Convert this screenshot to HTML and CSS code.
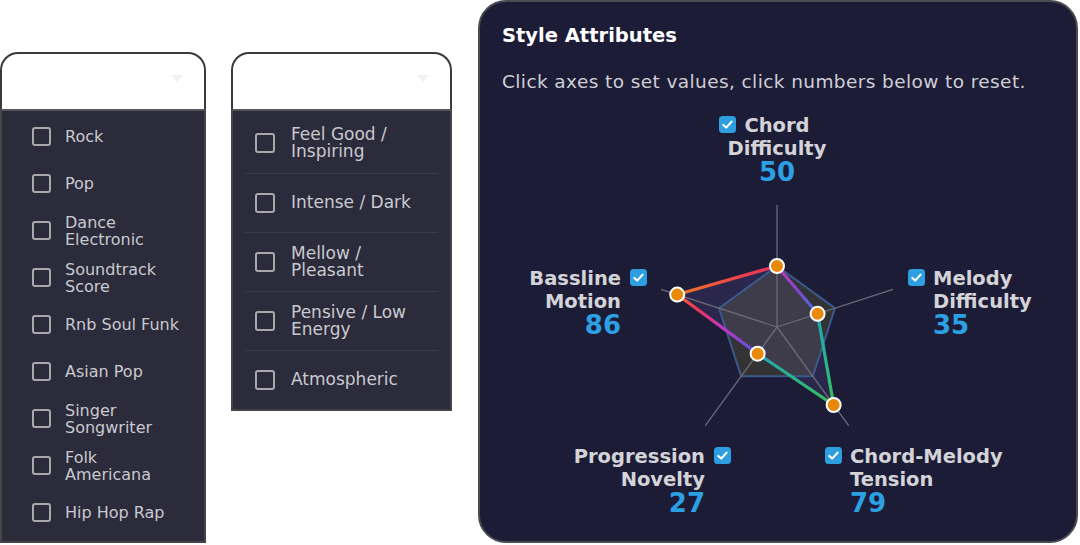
FILE: index.html
```html
<!DOCTYPE html>
<html lang="en">
<head>
<meta charset="utf-8">
<title>Style Attributes</title>
<link rel="stylesheet" href="styles.css">
</head>
<body>
<div class="page">
  <div class="dropdown genre">
    <div class="dd-head"><span class="dd-arrow"></span></div>
    <ul class="dd-list genre-list">
      <li class="dd-item"><span class="cb"></span><span class="lbl">Rock</span></li>
      <li class="dd-item"><span class="cb"></span><span class="lbl">Pop</span></li>
      <li class="dd-item"><span class="cb"></span><span class="lbl">Dance<br>Electronic</span></li>
      <li class="dd-item"><span class="cb"></span><span class="lbl">Soundtrack<br>Score</span></li>
      <li class="dd-item"><span class="cb"></span><span class="lbl">Rnb Soul Funk</span></li>
      <li class="dd-item"><span class="cb"></span><span class="lbl">Asian Pop</span></li>
      <li class="dd-item"><span class="cb"></span><span class="lbl">Singer<br>Songwriter</span></li>
      <li class="dd-item"><span class="cb"></span><span class="lbl">Folk<br>Americana</span></li>
      <li class="dd-item"><span class="cb"></span><span class="lbl">Hip Hop Rap</span></li>
    </ul>
  </div>

  <div class="dropdown mood">
    <div class="dd-head"><span class="dd-arrow"></span></div>
    <ul class="dd-list mood-list">
      <li class="dd-item first"><span class="cb"></span><span class="lbl">Feel Good /<br>Inspiring</span></li>
      <li class="dd-item"><span class="cb"></span><span class="lbl">Intense / Dark</span></li>
      <li class="dd-item"><span class="cb"></span><span class="lbl">Mellow /<br>Pleasant</span></li>
      <li class="dd-item"><span class="cb"></span><span class="lbl">Pensive / Low<br>Energy</span></li>
      <li class="dd-item"><span class="cb"></span><span class="lbl">Atmospheric</span></li>
    </ul>
  </div>

  <section class="panel">
    <h2 class="panel-title">Style Attributes</h2>
    <p class="panel-sub">Click axes to set values, click numbers below to reset.</p>
    <div class="chart">
      <svg class="radar" width="596" height="441" viewBox="0 0 596 441">
        <defs>
          <linearGradient id="g1" gradientUnits="userSpaceOnUse" x1="197.2" y1="194.6" x2="297" y2="166">
            <stop offset="0" stop-color="#f47a22"/>
            <stop offset="0.5" stop-color="#ee4a44"/>
            <stop offset="1" stop-color="#e8305e"/>
          </linearGradient>
          <linearGradient id="g2" gradientUnits="userSpaceOnUse" x1="297" y1="166" x2="337.6" y2="213.8">
            <stop offset="0" stop-color="#c03cb8"/>
            <stop offset="0.5" stop-color="#8444d0"/>
            <stop offset="1" stop-color="#3a78d8"/>
          </linearGradient>
          <linearGradient id="g3" gradientUnits="userSpaceOnUse" x1="337.6" y1="213.8" x2="353.65" y2="304.97">
            <stop offset="0" stop-color="#1fa6bc"/>
            <stop offset="1" stop-color="#34c25a"/>
          </linearGradient>
          <linearGradient id="g4" gradientUnits="userSpaceOnUse" x1="353.65" y1="304.97" x2="277.64" y2="253.65">
            <stop offset="0" stop-color="#36c256"/>
            <stop offset="1" stop-color="#20a6b6"/>
          </linearGradient>
          <linearGradient id="g5" gradientUnits="userSpaceOnUse" x1="277.64" y1="253.65" x2="197.21" y2="194.58">
            <stop offset="0" stop-color="#4a58d8"/>
            <stop offset="0.4" stop-color="#b838c8"/>
            <stop offset="0.75" stop-color="#ee3458"/>
            <stop offset="1" stop-color="#f26a30"/>
          </linearGradient>
        </defs>
        <polygon class="grid-fill" points="297,166 355,208.15 332.86,276.35 261.14,276.35 239,208.15"/>
        <polygon class="data-fill" points="297,166 337.6,213.8 353.65,304.97 277.64,253.65 197.21,194.58"/>
        <polygon class="grid-line" points="297,166 355,208.15 332.86,276.35 261.14,276.35 239,208.15"/>
        <g class="axes">
          <line x1="297" y1="227" x2="297" y2="105"/>
          <line x1="297" y1="227" x2="413" y2="189.3"/>
          <line x1="297" y1="227" x2="368.7" y2="325.7"/>
          <line x1="297" y1="227" x2="225.3" y2="325.7"/>
          <line x1="297" y1="227" x2="181" y2="189.3"/>
        </g>
        <g class="edges">
          <line x1="197.21" y1="194.58" x2="297" y2="166" stroke="url(#g1)"/>
          <line x1="297" y1="166" x2="337.6" y2="213.8" stroke="url(#g2)"/>
          <line x1="337.6" y1="213.8" x2="353.65" y2="304.97" stroke="url(#g3)"/>
          <line x1="353.65" y1="304.97" x2="277.64" y2="253.65" stroke="url(#g4)"/>
          <line x1="277.64" y1="253.65" x2="197.21" y2="194.58" stroke="url(#g5)"/>
        </g>
        <g class="dots">
          <circle cx="297" cy="166" r="7"/>
          <circle cx="337.6" cy="213.8" r="7"/>
          <circle cx="353.65" cy="304.97" r="7"/>
          <circle cx="277.64" cy="253.65" r="7"/>
          <circle cx="197.21" cy="194.58" r="7"/>
        </g>
      </svg>

      <div class="axis-label lbl-top">
        <div><span class="first-line">Chord<span class="check check-left"><svg width="17" height="17" viewBox="0 0 17 17"><rect width="17" height="17" rx="3.5" fill="#2d9ee0"/><path d="M4.3 8.9 L7.2 11.6 L12.6 5.6" fill="none" stroke="#fff" stroke-width="2.1" stroke-linecap="round" stroke-linejoin="round"/></svg></span></span></div>
        <div>Difficulty</div>
        <div class="num">50</div>
      </div>

      <div class="axis-label lbl-right">
        <div><span class="first-line">Melody<span class="check check-left"><svg width="17" height="17" viewBox="0 0 17 17"><rect width="17" height="17" rx="3.5" fill="#2d9ee0"/><path d="M4.3 8.9 L7.2 11.6 L12.6 5.6" fill="none" stroke="#fff" stroke-width="2.1" stroke-linecap="round" stroke-linejoin="round"/></svg></span></span></div>
        <div>Difficulty</div>
        <div class="num">35</div>
      </div>

      <div class="axis-label lbl-left">
        <div><span class="first-line">Bassline<span class="check check-right"><svg width="17" height="17" viewBox="0 0 17 17"><rect width="17" height="17" rx="3.5" fill="#2d9ee0"/><path d="M4.3 8.9 L7.2 11.6 L12.6 5.6" fill="none" stroke="#fff" stroke-width="2.1" stroke-linecap="round" stroke-linejoin="round"/></svg></span></span></div>
        <div>Motion</div>
        <div class="num">86</div>
      </div>

      <div class="axis-label lbl-bl">
        <div><span class="first-line">Progression<span class="check check-right"><svg width="17" height="17" viewBox="0 0 17 17"><rect width="17" height="17" rx="3.5" fill="#2d9ee0"/><path d="M4.3 8.9 L7.2 11.6 L12.6 5.6" fill="none" stroke="#fff" stroke-width="2.1" stroke-linecap="round" stroke-linejoin="round"/></svg></span></span></div>
        <div>Novelty</div>
        <div class="num">27</div>
      </div>

      <div class="axis-label lbl-br">
        <div><span class="first-line">Chord-Melody<span class="check check-left"><svg width="17" height="17" viewBox="0 0 17 17"><rect width="17" height="17" rx="3.5" fill="#2d9ee0"/><path d="M4.3 8.9 L7.2 11.6 L12.6 5.6" fill="none" stroke="#fff" stroke-width="2.1" stroke-linecap="round" stroke-linejoin="round"/></svg></span></span></div>
        <div>Tension</div>
        <div class="num">79</div>
      </div>
    </div>
  </section>
</div>
</body>
</html>
```

FILE: styles.css
```css
* { box-sizing: border-box; }

body {
  margin: 0;
  background: #ffffff;
  font-family: "DejaVu Sans", "Liberation Sans", sans-serif;
}

.page {
  display: flex;
  align-items: flex-start;
  width: 1080px;
  height: 545px;
  overflow: hidden;
}

/* ---------- dropdowns ---------- */
.dropdown {
  margin-top: 52px;
  display: flex;
  flex-direction: column;
}

.genre { width: 206px; }
.mood { width: 221px; margin-left: 25px; }

.dd-head {
  height: 57px;
  background: #ffffff;
  border: 2px solid #3b3b3f;
  border-bottom: none;
  border-radius: 18px 18px 0 0;
  display: flex;
  justify-content: flex-end;
  align-items: flex-start;
  padding: 21px 21px 0 0;
}

.dd-arrow {
  width: 0;
  height: 0;
  border-left: 6px solid transparent;
  border-right: 6px solid transparent;
  border-top: 7px solid #f1f1f1;
}

.dd-list {
  list-style: none;
  margin: 0;
  background: #2b2b3b;
  border: 2px solid #454549;
  border-top-color: #56565a;
  color: #c9c9cf;
}

.dd-item {
  display: flex;
  align-items: center;
}

.cb {
  flex: none;
  border: 2px solid #a9a9ad;
  border-radius: 3px;
}

.genre-list {
  padding: 2px 0 5px 0;
  font-size: 16px;
  line-height: 17px;
}

.genre-list .dd-item {
  height: 47px;
  padding-left: 30px;
}

.genre-list .cb {
  width: 19px;
  height: 19px;
  margin-right: 14px;
}

.mood-list {
  padding: 0 12px;
  font-size: 17px;
  line-height: 17.5px;
}

.mood-list .dd-item {
  height: 59px;
  padding-left: 10px;
  border-top: 1px solid #3b3b4b;
}

.mood-list .dd-item.first {
  height: 62px;
  padding-top: 2px;
  border-top: none;
}

.mood-list .cb {
  width: 20px;
  height: 20px;
  margin-right: 16px;
}

/* ---------- style attributes panel ---------- */
.panel {
  width: 600px;
  height: 543px;
  margin-left: 26px;
  border: 2px solid #4c4c50;
  border-radius: 28px;
  background: #1d1c37;
  display: flex;
  flex-direction: column;
  overflow: hidden;
}

.panel-title {
  margin: 22px 0 0 22px;
  font-size: 19.5px;
  font-weight: bold;
  line-height: 24px;
  color: #ffffff;
}

.panel-sub {
  margin: 22px 0 0 22px;
  font-size: 18.5px;
  letter-spacing: 0.4px;
  line-height: 24px;
  color: #cfcfd5;
  white-space: nowrap;
}

.chart {
  position: relative;
  margin-top: 6px;
  height: 441px;
  flex: none;
}

.radar {
  position: absolute;
  left: 0;
  top: 0;
}

.grid-fill { fill: #333336; }
.data-fill { fill: rgba(150, 120, 230, 0.12); }
.grid-line { fill: none; stroke: #3b5a8c; stroke-width: 2; }
.axes line { stroke: #6b6b76; stroke-width: 1.3; }
.edges line { stroke-width: 3.2; stroke-linecap: round; }
.dots circle { fill: #e8890a; stroke: #ffffff; stroke-width: 2; }

.axis-label {
  position: absolute;
  font-size: 19.5px;
  font-weight: bold;
  line-height: 23px;
  color: #d3d3d8;
  white-space: nowrap;
}

.axis-label .num {
  font-size: 26px;
  line-height: 25px;
  color: #2ba0e2;
}

.first-line { position: relative; }

.check {
  position: absolute;
  top: 50%;
  margin-top: -9px;
  width: 17px;
  height: 17px;
  line-height: 0;
}

.check-left { left: -25px; }
.check-right { right: -26px; }

.lbl-top {
  left: 197px;
  width: 200px;
  top: 13.5px;
  text-align: center;
}

.lbl-right {
  left: 453px;
  top: 166.5px;
}

.lbl-left {
  right: 455px;
  top: 166.5px;
  text-align: right;
}

.lbl-bl {
  right: 371px;
  top: 344.5px;
  text-align: right;
}

.lbl-br {
  left: 370px;
  top: 344.5px;
}
```
